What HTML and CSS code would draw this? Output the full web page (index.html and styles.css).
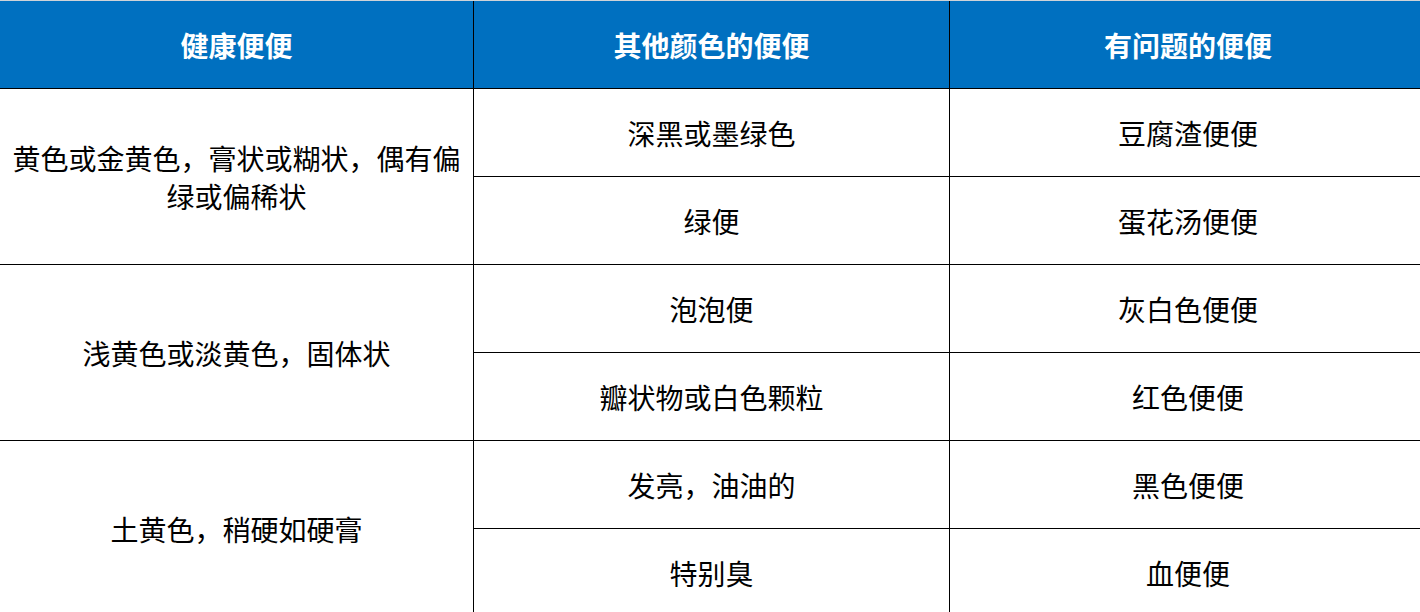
FILE: index.html
```html
<!DOCTYPE html>
<html lang="zh-CN">
<head>
<meta charset="utf-8">
<title>便便颜色对照表</title>
<link rel="stylesheet" href="styles.css">
</head>
<body>
<table class="poo-table">
  <colgroup>
    <col class="c1">
    <col class="c2">
    <col class="c3">
  </colgroup>
  <thead>
    <tr>
      <th>健康便便</th>
      <th>其他颜色的便便</th>
      <th class="last">有问题的便便</th>
    </tr>
  </thead>
  <tbody>
    <tr>
      <td rowspan="2">黄色或金黄色，膏状或糊状，偶有偏绿或偏稀状</td>
      <td>深黑或墨绿色</td>
      <td class="last">豆腐渣便便</td>
    </tr>
    <tr>
      <td>绿便</td>
      <td class="last">蛋花汤便便</td>
    </tr>
    <tr>
      <td rowspan="2">浅黄色或淡黄色，固体状</td>
      <td>泡泡便</td>
      <td class="last">灰白色便便</td>
    </tr>
    <tr>
      <td>瓣状物或白色颗粒</td>
      <td class="last">红色便便</td>
    </tr>
    <tr>
      <td rowspan="2">土黄色，稍硬如硬膏</td>
      <td>发亮，油油的</td>
      <td class="last">黑色便便</td>
    </tr>
    <tr>
      <td>特别臭</td>
      <td class="last">血便便</td>
    </tr>
  </tbody>
</table>
</body>
</html>
```

FILE: styles.css
```css
html, body {
  margin: 0;
  padding: 0;
  background: #ffffff;
}

body {
  font-family: "Noto Sans CJK SC", "Microsoft YaHei", sans-serif;
  color: #000000;
  overflow: hidden;
}

.poo-table {
  width: 1426px;
  table-layout: fixed;
  border-collapse: separate;
  border-spacing: 0;
  border-top: 1px solid #cfd3d8;
}

.c1 { width: 474px; }
.c2 { width: 476px; }
.c3 { width: 476px; }

.poo-table th,
.poo-table td {
  box-sizing: border-box;
  padding: 0 6px;
  text-align: center;
  vertical-align: middle;
  font-size: 28px;
  line-height: 38px;
  border-bottom: 1px solid #000000;
  border-right: 1px solid #000000;
}

.poo-table th.last,
.poo-table td.last {
  border-right: none;
}

.poo-table th {
  height: 88px;
  background: #0070c0;
  color: #ffffff;
  font-weight: 700;
}

.poo-table td {
  height: 88px;
  font-weight: 400;
}
```
